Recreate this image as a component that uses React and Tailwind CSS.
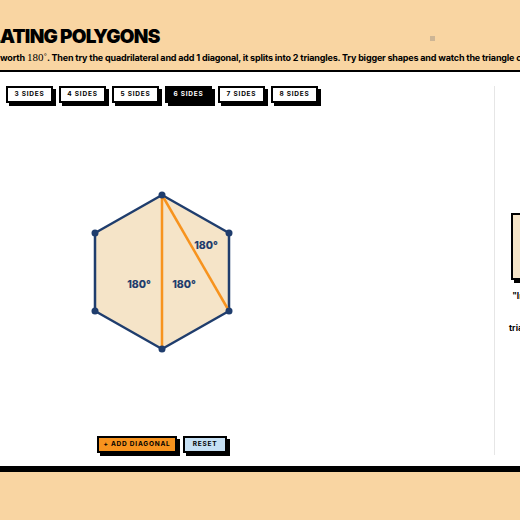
import React, { useState } from 'react';

const SIDES = [3, 4, 5, 6, 7, 8];

// hexagon vertices, top going clockwise
const HEX = [
  [162, 92],
  [229, 130],
  [229, 208],
  [162, 246],
  [95, 208],
  [95, 130],
];

const SideButton = ({ n, active, onClick }) => (
  <button
    onClick={onClick}
    className={`w-[47px] h-[17px] border-2 border-black shadow-[3px_3px_0_#000] text-[6.5px] font-bold tracking-[0.12em] leading-none flex items-center justify-center ${
      active ? 'bg-black text-white' : 'bg-white text-black'
    }`}
  >
    {n} SIDES
  </button>
);

const Hexagon = () => {
  const pts = HEX.map(p => p.join(',')).join(' ');
  return (
    <svg width="494" height="333" className="block">
      <polygon points={pts} fill="#f5e4c8" stroke="#1f3d6d" strokeWidth="2.5" strokeLinejoin="round" />
      <line x1="162" y1="92" x2="162" y2="246" stroke="#f7931e" strokeWidth="2.5" />
      <line x1="162" y1="92" x2="229" y2="208" stroke="#f7931e" strokeWidth="2.5" />
      {HEX.map(([x, y], i) => (
        <circle key={i} cx={x} cy={y} r="3.5" fill="#1f3d6d" />
      ))}
      <g fill="#1f3d6d" fontSize="10.5" fontWeight="800" fontFamily="Inter, sans-serif" textAnchor="middle">
        <text x="139" y="185">180°</text>
        <text x="184" y="185">180°</text>
        <text x="206" y="146">180°</text>
      </g>
    </svg>
  );
};

export default function App() {
  const [sides, setSides] = useState(6);

  return (
    <div className="w-[520px] h-[520px] overflow-hidden bg-[#f9d5a2] font-['Inter',sans-serif] text-black">
      {/* header */}
      <header className="relative h-[70px] pt-[27px] whitespace-nowrap">
        <h1 className="flex text-[19px] font-black leading-none tracking-[-0.04em]">
          <span className="w-0 flex justify-end">TRIANGUL</span>ATING POLYGONS
        </h1>
        <p className="mt-[6px] flex items-baseline text-[9px] font-bold leading-none tracking-[-0.02em]">
          <span className="w-0 flex justify-end">Start with a triangle: its three angles are&nbsp;</span>
          worth&nbsp;<span className="font-['Liberation_Serif',serif] font-normal text-[11px] tracking-normal">180˚</span>. Then try the quadrilateral and add 1 diagonal, it splits into 2 triangles. Try bigger shapes and watch the triangle count grow.
        </p>
        <span className="absolute left-[430px] top-[36px] w-[5px] h-[5px] bg-[#cdb595]" />
      </header>

      {/* workspace */}
      <main className="border-t-2 border-black bg-white h-[396px] pt-[14px] pb-[11px] flex">
        <section className="w-[495px] shrink-0 border-r border-[#e6e6e6] flex flex-col">
          <div className="flex gap-[6px] pl-[6px]">
            {SIDES.map(n => (
              <SideButton key={n} n={n} active={n === sides} onClick={() => setSides(n)} />
            ))}
          </div>
          <Hexagon />
          <div className="flex gap-[6px] pl-[97px]">
            <button className="w-[80px] h-[17px] border-2 border-black bg-[#f7931e] shadow-[3px_3px_0_#000] text-[6.5px] font-bold tracking-[0.12em] leading-none">
              + ADD DIAGONAL
            </button>
            <button className="w-[44px] h-[17px] border-2 border-black bg-[#c6e0f4] shadow-[3px_3px_0_#000] text-[6.5px] font-bold tracking-[0.12em] leading-none">
              RESET
            </button>
          </div>
        </section>

        {/* triangle count panel */}
        <aside className="shrink-0 w-[220px] pl-[16px] pt-[127px] flex flex-col items-start">
          <div className="h-[67px] w-[170px] border-2 border-black bg-[#f5e4c8] shadow-[3px_3px_0_#000]" />
          <div className="mt-[8px] -ml-[2px] flex flex-col items-center whitespace-nowrap text-[8.5px] font-bold leading-[16px] text-black">
            <span>"In a hexagon, one corner reaches three others,</span>
            <span>so it splits into</span>
            <span>triangles — always the number of sides minus 2."</span>
          </div>
        </aside>
      </main>

      <div className="h-[6px] bg-black" />
    </div>
  );
}
